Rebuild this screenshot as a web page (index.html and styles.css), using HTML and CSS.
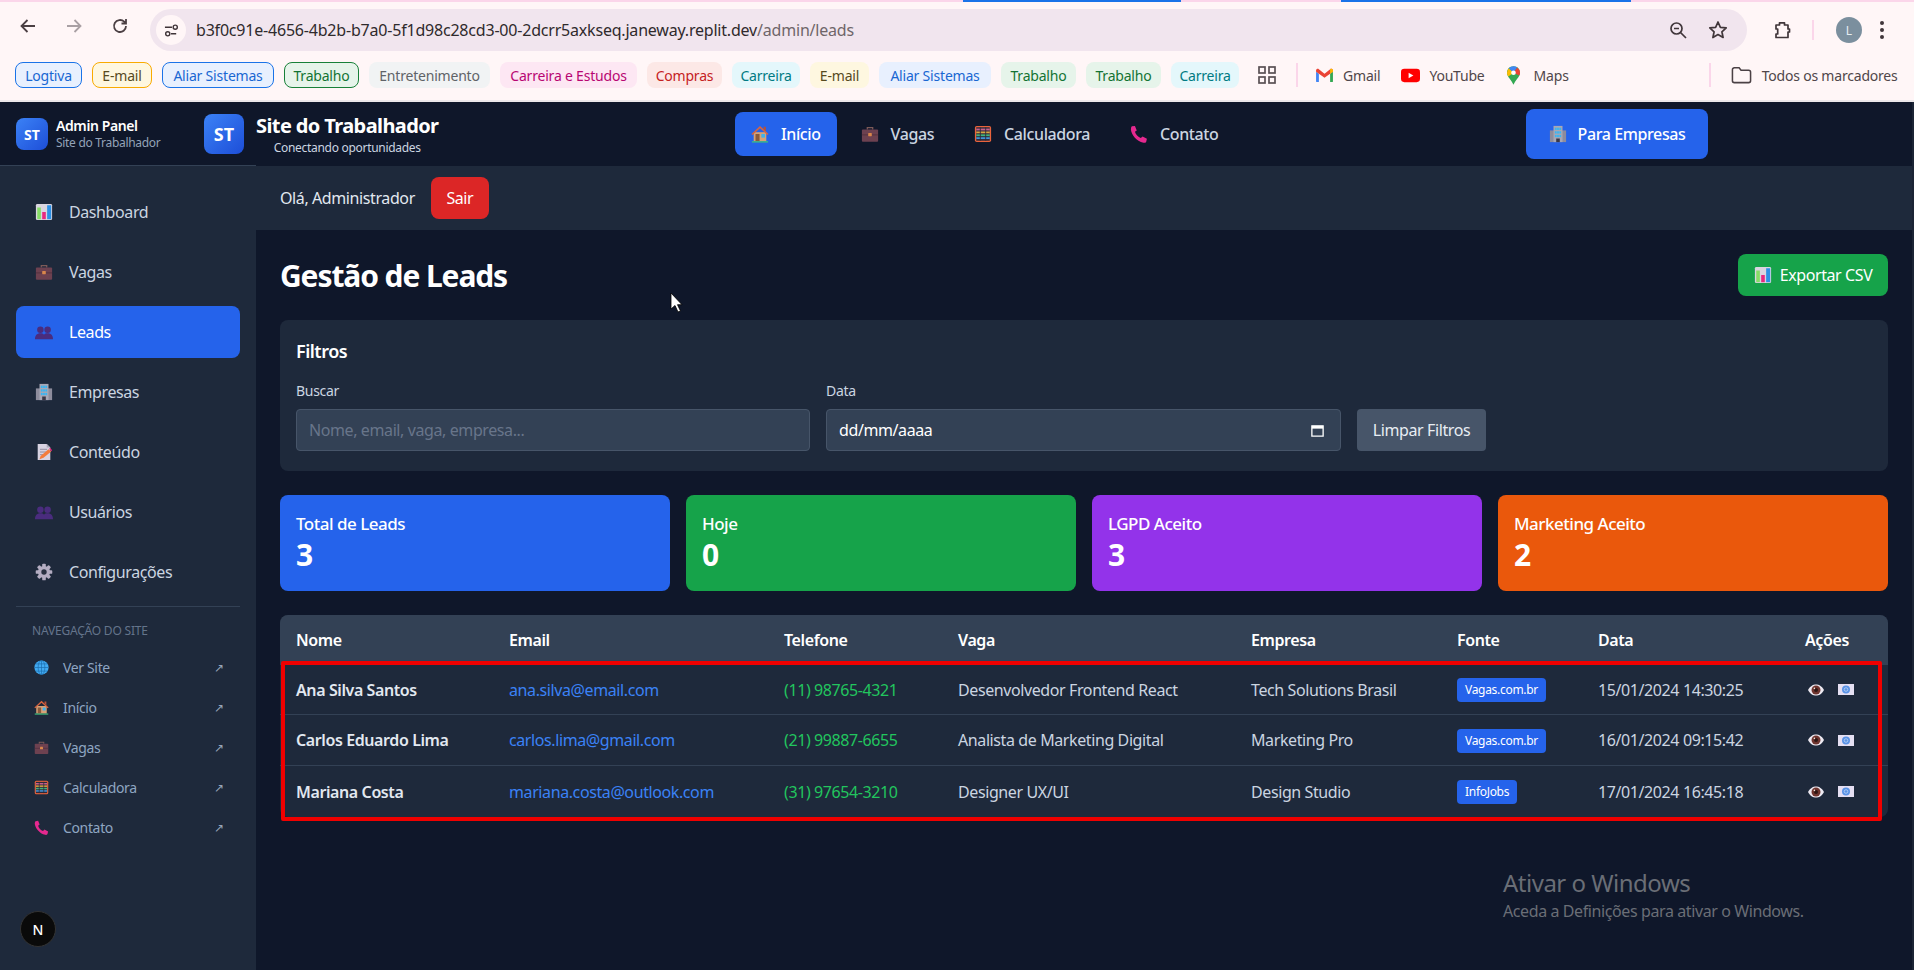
FILE: index.html
```html
<!DOCTYPE html>
<html lang="pt">
<head>
<meta charset="utf-8">
<title>Gestão de Leads</title>
<link rel="stylesheet" href="styles.css">
</head>
<body>
<svg class="defs" width="0" height="0" aria-hidden="true">
  <symbol id="i-chart" viewBox="0 0 20 20"><rect x="1" y="1" width="18" height="18" rx="1.5" fill="#d9d5e0"/><rect x="2.5" y="5" width="4" height="13" fill="#86dd66"/><rect x="8" y="10" width="4" height="8" fill="#e8287f"/><rect x="13.5" y="2.5" width="4.5" height="15.5" fill="#2b90e6"/></symbol>
  <symbol id="i-case" viewBox="0 0 20 20"><path d="M7 5V3h6v2" fill="none" stroke="#7d5a58" stroke-width="1.4"/><rect x="1" y="5" width="18" height="13.5" rx="1" fill="#6d4150"/><rect x="1" y="10.5" width="18" height="1" fill="#54303f"/><rect x="8" y="9" width="4" height="3.4" rx=".5" fill="#d9874b"/></symbol>
  <symbol id="i-people" viewBox="0 0 20 20"><circle cx="6" cy="7.5" r="3.6" fill="#4a2c7e"/><circle cx="14" cy="7.5" r="3.6" fill="#4a2c7e"/><path d="M0 18c0-4 2-6.500 6-6.500 2 0 3.200.6 4 1.500.8-.9 2-1.500 4-1.500 4 0 6 2.500 6 6.500z" fill="#4a2c7e"/></symbol>
  <symbol id="i-building" viewBox="0 0 20 20"><rect x="1" y="6" width="18" height="13" fill="#8d8c9c"/><rect x="5" y="1" width="10" height="18" fill="#a8a7b5"/><g fill="#36b6f5"><rect x="6.500" y="3" width="2" height="2.500"/><rect x="9" y="3" width="2" height="2.500"/><rect x="11.500" y="3" width="2" height="2.500"/><rect x="6.500" y="7" width="2" height="2.500"/><rect x="9" y="7" width="2" height="2.500"/><rect x="11.500" y="7" width="2" height="2.500"/><rect x="6.500" y="11" width="2" height="2.500"/><rect x="9" y="11" width="2" height="2.500"/><rect x="11.500" y="11" width="2" height="2.500"/></g><rect x="8" y="15" width="4" height="4" fill="#3a3848"/></symbol>
  <symbol id="i-memo" viewBox="0 0 20 20"><path d="M3 1h10l4 4v14H3z" fill="#d8d3e2"/><path d="M13 1v4h4z" fill="#aaa5b8"/><path d="M5.500 7h8M5.500 10h7M5.500 13h4" stroke="#8d8799" stroke-width="1"/><path d="M5 18l1.200-3.500L15 7l3 2.500-8.500 7z" fill="#f47c3c"/><path d="M15.500 6.500l1.500-1 2 2.500-1 1.200z" fill="#e8287f"/></symbol>
  <symbol id="i-gear" viewBox="0 0 20 20"><path d="M8.300 1h3.400l.5 2.500 1.700.7 2.100-1.400 2.400 2.400-1.400 2.100.7 1.700 2.500.5v3.400l-2.500.5-.7 1.700 1.400 2.100-2.400 2.400-2.100-1.400-1.700.7-.5 2.500H8.300l-.5-2.500-1.700-.7L4 17.100l-2.400-2.400L3 12.600l-.7-1.700L-.2 10.400V7l2.500-.5.700-1.700L1.600 2.700" fill="none"/><g fill="#b4adc2"><circle cx="10" cy="10" r="6.800"/><rect x="8" y="0.800" width="4" height="18.400" rx="1"/><rect x="8" y="0.800" width="4" height="18.400" rx="1" transform="rotate(45 10 10)"/><rect x="8" y="0.800" width="4" height="18.400" rx="1" transform="rotate(90 10 10)"/><rect x="8" y="0.800" width="4" height="18.400" rx="1" transform="rotate(135 10 10)"/></g><circle cx="10" cy="10" r="3" fill="#2a3142"/></symbol>
  <symbol id="i-globe" viewBox="0 0 20 20"><circle cx="10" cy="10" r="9.500" fill="#41aaf2"/><g fill="none" stroke="#1b6cab" stroke-width=".9"><ellipse cx="10" cy="10" rx="4.500" ry="9.500"/><path d="M10 .5v19M.5 10h19M2 5.200h16M2 14.800h16"/></g></symbol>
  <symbol id="i-house" viewBox="0 0 20 20"><rect x="3" y="8" width="14" height="10" fill="#d7a277"/><path d="M10 1L.5 10l1.200 1L10 3.500l8.300 7.500 1.200-1z" fill="#d9643f"/><path d="M14 2h2.500v5L14 5z" fill="#b85038"/><rect x="5" y="10" width="4.500" height="8" fill="#8a5a3c"/><rect x="11.500" y="10" width="4" height="4" fill="#3db2f0"/><rect x="1" y="18" width="18" height="1.500" fill="#3fbf7f"/></symbol>
  <symbol id="i-abacus" viewBox="0 0 20 20"><rect x="1" y="1" width="18" height="18" rx="2" fill="#e9633c"/><rect x="2.500" y="2.500" width="15" height="15" fill="#2d2a3a"/><rect x="2.500" y="4" width="15" height="2" fill="#c75f8c"/><rect x="2.500" y="7.200" width="15" height="2" fill="#d9a441"/><rect x="2.500" y="10.400" width="15" height="2" fill="#41b27a"/><rect x="2.500" y="13.600" width="15" height="2" fill="#3f94d9"/><path d="M7 2.500v15M13 2.500v15" stroke="#2d2a3a" stroke-width="1"/></symbol>
  <symbol id="i-phone" viewBox="0 0 20 20"><path d="M2 1.500L5.500 1l2 5-2 1.500c.8 3 3.500 6 6.500 7l2-1.800 4.800 2.500-.8 3.300c-.5 1-1.500 1.500-3 1.300C7 18 1.500 10.500 1 5c0-1.500.3-2.700 1-3.500z" fill="#e5298f"/></symbol>
  <symbol id="i-eye" viewBox="0 0 20 14"><path d="M0 7C3 1.500 6.500 0 10 0s7 1.500 10 7c-3 5.500-6.500 7-10 7S3 12.500 0 7z" fill="#ece8f0"/><circle cx="10" cy="7" r="5.600" fill="#6f342e"/><circle cx="10" cy="7" r="2.500" fill="#2e1512"/><circle cx="8" cy="5" r="1" fill="#f4e6e0"/></symbol>
  <symbol id="i-mail" viewBox="0 0 16 11"><rect width="16" height="11" fill="#e5dff2"/><circle cx="8" cy="5.500" r="4" fill="#5a93e6"/><circle cx="8" cy="5.500" r="1.800" fill="none" stroke="#bcd3f5" stroke-width=".8"/></symbol>
</svg>

<header class="browser">
  <div class="tabstrip"><span class="seg seg-a"></span><span class="seg seg-b"></span></div>
  <div class="toolbar">
    <div class="nav-btns">
      <svg class="tb-ico" viewBox="0 0 20 20"><path d="M17 10H4M9.500 4L3.500 10l6 6" fill="none" stroke="#4b3f43" stroke-width="1.800"/></svg>
      <svg class="tb-ico" viewBox="0 0 20 20"><path d="M3 10h13M10.500 4l6 6-6 6" fill="none" stroke="#a9a0a4" stroke-width="1.800"/></svg>
      <svg class="tb-ico" viewBox="0 0 20 20"><path d="M16 10a6 6 0 1 1-1.800-4.300L16 7.500M16 3v4.500h-4.500" fill="none" stroke="#4b3f43" stroke-width="1.800"/></svg>
    </div>
    <div class="omnibox">
      <span class="site-chip"><svg class="chip-ico" viewBox="0 0 16 16"><path d="M1 4.500h7.500M13 11.500H7.500" stroke="#3f3438" stroke-width="1.600"/><circle cx="12" cy="4.500" r="2.200" fill="none" stroke="#3f3438" stroke-width="1.500"/><circle cx="4" cy="11.500" r="2.200" fill="none" stroke="#3f3438" stroke-width="1.500"/></svg></span>
      <span class="url">b3f0c91e-4656-4b2b-b7a0-5f1d98c28cd3-00-2dcrr5axkseq.janeway.replit.dev<span class="url-path">/admin/leads</span></span>
      <svg class="omni-ico omni-zoom" viewBox="0 0 20 20"><circle cx="8.500" cy="8.500" r="5.500" fill="none" stroke="#40363a" stroke-width="1.700"/><path d="M12.500 12.500L18 18M6 8.500h5" stroke="#40363a" stroke-width="1.700"/></svg>
      <svg class="omni-ico" viewBox="0 0 20 20"><path d="M10 2l2.400 5.300 5.800.6-4.300 3.900 1.200 5.700L10 14.600l-5.100 2.900 1.200-5.700L1.800 7.900l5.800-.6z" fill="none" stroke="#40363a" stroke-width="1.700" stroke-linejoin="round"/></svg>
    </div>
    <div class="tb-right">
      <svg class="tb-ico" viewBox="0 0 20 20"><path d="M4 5h3.500V2.800h5V5H16v4h1.500v3H16v5.500H4v-3.500h1.700v-5H4z" fill="none" stroke="#40363a" stroke-width="1.700" stroke-linejoin="round"/></svg>
      <span class="tb-div"></span>
      <span class="avatar">L</span>
      <span class="dots"><i></i><i></i><i></i></span>
    </div>
  </div>
  <div class="bookmarks">
    <span class="bm bm-blue bm-line c1">Logtiva</span>
    <span class="bm bm-yellow bm-line c2">E-mail</span>
    <span class="bm bm-blue bm-line c3">Aliar Sistemas</span>
    <span class="bm bm-green bm-line c4">Trabalho</span>
    <span class="bm bm-grey c5">Entretenimento</span>
    <span class="bm bm-pink c6">Carreira e Estudos</span>
    <span class="bm bm-red c7">Compras</span>
    <span class="bm bm-cyan c8">Carreira</span>
    <span class="bm bm-yellow c9">E-mail</span>
    <span class="bm bm-blue c3">Aliar Sistemas</span>
    <span class="bm bm-green c4">Trabalho</span>
    <span class="bm bm-green c4">Trabalho</span>
    <span class="bm bm-cyan c8">Carreira</span>
    <svg class="apps" viewBox="0 0 18 18"><g fill="none" stroke="#5a5054" stroke-width="1.700"><rect x="1" y="1" width="6" height="6"/><rect x="11" y="1" width="6" height="6"/><rect x="1" y="11" width="6" height="6"/><rect x="11" y="11" width="6" height="6"/></g></svg>
    <span class="bm-div"></span>
    <span class="link link-gmail"><svg class="link-ico" viewBox="0 0 20 16"><path d="M1 15V4l3 2v9H2a1 1 0 0 1-1-1z" fill="#4285f4"/><path d="M19 15V4l-3 2v9h2a1 1 0 0 0 1-1z" fill="#34a853"/><path d="M4 6L1 4V2.500C1 1 2.800.2 4 1.200L10 6l6-4.800c1.200-1 3-.2 3 1.300V4l-3 2-6 4.500z" fill="#ea4335"/><path d="M16 1.200c1.200-1 3-.2 3 1.300V4l-3 2z" fill="#fbbc04"/></svg>Gmail</span>
    <span class="link link-yt"><svg class="link-ico" viewBox="0 0 20 14"><rect width="20" height="14" rx="3.500" fill="#f00"/><path d="M8 4l5 3-5 3z" fill="#fff"/></svg>YouTube</span>
    <span class="link link-maps"><svg class="link-pin" viewBox="0 0 14 20"><path d="M7 0C3 0 0 3 0 7c0 4.500 5 8 7 13 2-5 7-8.500 7-13 0-4-3-7-7-7z" fill="#34a853"/><path d="M2 2.300A7 7 0 0 0 0 7c0 1.500.6 2.800 1.400 4L7 7z" fill="#fbbc04"/><path d="M2 2.300A7 7 0 0 1 7 0c1.500 0 2.800.5 4 1.300L7 7z" fill="#4285f4"/><path d="M11 1.300A7 7 0 0 1 14 7c0 1-.3 2-.8 3L7 7z" fill="#ea4335"/><circle cx="7" cy="7" r="2.500" fill="#fff"/></svg>Maps</span>
    <span class="bm-div bm-div-end"></span>
    <span class="link link-all"><svg class="link-folder" viewBox="0 0 22 18"><path d="M1.500 3.500a2 2 0 0 1 2-2h5l2 2.500h8a2 2 0 0 1 2 2v9a2 2 0 0 1-2 2h-15a2 2 0 0 1-2-2z" fill="none" stroke="#4b4145" stroke-width="1.600"/></svg>Todos os marcadores</span>
  </div>
</header>

<div class="app">
  <div class="topline">
    <div class="admin-head">
      <span class="logo logo-sm">ST</span>
      <div class="admin-txt"><strong>Admin Panel</strong><small>Site do Trabalhador</small></div>
    </div>
    <div class="brand">
      <span class="logo logo-lg">ST</span>
      <div class="brand-txt"><strong>Site do Trabalhador</strong><small>Conectando oportunidades</small></div>
    </div>
    <nav class="site-nav">
      <a class="site-link is-on"><svg class="em18"><use href="#i-house"/></svg>Início</a>
      <a class="site-link"><svg class="em18"><use href="#i-case"/></svg>Vagas</a>
      <a class="site-link"><svg class="em18"><use href="#i-abacus"/></svg>Calculadora</a>
      <a class="site-link"><svg class="em18"><use href="#i-phone"/></svg>Contato</a>
    </nav>
    <a class="cta"><svg class="em18"><use href="#i-building"/></svg>Para Empresas</a>
  </div>

  <div class="body-row">
    <aside class="sidebar">
      <ul class="side-list">
        <li class="side-item"><svg class="em18"><use href="#i-chart"/></svg>Dashboard</li>
        <li class="side-item"><svg class="em18"><use href="#i-case"/></svg>Vagas</li>
        <li class="side-item is-on"><svg class="em18"><use href="#i-people"/></svg>Leads</li>
        <li class="side-item"><svg class="em18"><use href="#i-building"/></svg>Empresas</li>
        <li class="side-item"><svg class="em18"><use href="#i-memo"/></svg>Conteúdo</li>
        <li class="side-item"><svg class="em18"><use href="#i-people"/></svg>Usuários</li>
        <li class="side-item"><svg class="em18"><use href="#i-gear"/></svg>Configurações</li>
      </ul>
      <div class="side-sep"></div>
      <div class="side-cap">NAVEGAÇÃO DO SITE</div>
      <ul class="sub-list">
        <li class="sub-item"><svg class="em15"><use href="#i-globe"/></svg><span class="sub-txt">Ver Site</span><span class="ext">↗</span></li>
        <li class="sub-item"><svg class="em15"><use href="#i-house"/></svg><span class="sub-txt">Início</span><span class="ext">↗</span></li>
        <li class="sub-item"><svg class="em15"><use href="#i-case"/></svg><span class="sub-txt">Vagas</span><span class="ext">↗</span></li>
        <li class="sub-item"><svg class="em15"><use href="#i-abacus"/></svg><span class="sub-txt">Calculadora</span><span class="ext">↗</span></li>
        <li class="sub-item"><svg class="em15"><use href="#i-phone"/></svg><span class="sub-txt">Contato</span><span class="ext">↗</span></li>
      </ul>
      <span class="next-badge">N</span>
    </aside>

    <main class="main">
      <div class="userbar"><span>Olá, Administrador</span><button class="btn-exit">Sair</button></div>
      <div class="content">
        <div class="page-head">
          <h1>Gestão de Leads</h1>
          <button class="btn-export"><svg class="em18"><use href="#i-chart"/></svg>Exportar CSV</button>
        </div>

        <section class="filters">
          <h2>Filtros</h2>
          <div class="filter-row">
            <label class="field"><span>Buscar</span><span class="input ph">Nome, email, vaga, empresa...</span></label>
            <label class="field"><span>Data</span><span class="input date">dd/mm/aaaa<svg class="cal" viewBox="0 0 16 16"><path d="M2 3h12v11H2z" fill="none" stroke="#fff" stroke-width="1.400"/><rect x="2" y="3" width="12" height="3" fill="#fff"/></svg></span></label>
            <button class="btn-clear">Limpar Filtros</button>
          </div>
        </section>

        <section class="stats">
          <div class="stat st-blue"><span>Total de Leads</span><b>3</b></div>
          <div class="stat st-green"><span>Hoje</span><b>0</b></div>
          <div class="stat st-purple"><span>LGPD Aceito</span><b>3</b></div>
          <div class="stat st-orange"><span>Marketing Aceito</span><b>2</b></div>
        </section>

        <div class="table-wrap">
          <table class="leads">
            <colgroup><col class="c-nome"><col class="c-email"><col class="c-tel"><col class="c-vaga"><col class="c-emp"><col class="c-fonte"><col class="c-data"><col class="c-acoes"></colgroup>
            <thead><tr><th>Nome</th><th>Email</th><th>Telefone</th><th>Vaga</th><th>Empresa</th><th>Fonte</th><th>Data</th><th>Ações</th></tr></thead>
            <tbody>
              <tr class="r-first"><td class="name">Ana Silva Santos</td><td class="mail">ana.silva@email.com</td><td class="tel">(11) 98765-4321</td><td>Desenvolvedor Frontend React</td><td>Tech Solutions Brasil</td><td><span class="tag">Vagas.com.br</span></td><td>15/01/2024 14:30:25</td><td><span class="acts"><svg class="act-eye"><use href="#i-eye"/></svg><svg class="act-mail"><use href="#i-mail"/></svg></span></td></tr>
              <tr><td class="name">Carlos Eduardo Lima</td><td class="mail">carlos.lima@gmail.com</td><td class="tel">(21) 99887-6655</td><td>Analista de Marketing Digital</td><td>Marketing Pro</td><td><span class="tag">Vagas.com.br</span></td><td>16/01/2024 09:15:42</td><td><span class="acts"><svg class="act-eye"><use href="#i-eye"/></svg><svg class="act-mail"><use href="#i-mail"/></svg></span></td></tr>
              <tr><td class="name">Mariana Costa</td><td class="mail">mariana.costa@outlook.com</td><td class="tel">(31) 97654-3210</td><td>Designer UX/UI</td><td>Design Studio</td><td><span class="tag">InfoJobs</span></td><td>17/01/2024 16:45:18</td><td><span class="acts"><svg class="act-eye"><use href="#i-eye"/></svg><svg class="act-mail"><use href="#i-mail"/></svg></span></td></tr>
            </tbody>
          </table>
          <div class="highlight"></div>
        </div>
      </div>
      <div class="watermark"><p class="wm-1">Ativar o Windows</p><p class="wm-2">Aceda a Definições para ativar o Windows.</p></div>
      <svg class="cursor" viewBox="0 0 14 21"><path d="M1 1v16l4-3.500 3 6.500 2.500-1-3-6.300H12z" fill="#fff" stroke="#000" stroke-width=".8"/></svg>
    </main>
  </div>
</div>
</body>
</html>
```

FILE: styles.css
```css
* { box-sizing: border-box; }
html, body { margin: 0; height: 970px; overflow: hidden; }
body { font-family: "Noto Sans", "Liberation Sans", sans-serif; background: #0f172a; color: #fff; }
.defs { position: absolute; }
ul { list-style: none; margin: 0; padding: 0; }
p { margin: 0; }
button { font: inherit; border: 0; color: #fff; padding: 0; }

/* browser chrome */
.browser { height: 102px; background: #fff6f7; color: #40363a; border-bottom: 2px solid #ece8ea; }
.tabstrip { height: 2px; background: #fbd6ea; display: flex; }
.seg { height: 2px; background: #1a73e8; }
.seg-a { margin-left: 963px; width: 218px; }
.seg-b { margin-left: 160px; width: 290px; }
.toolbar { height: 48px; display: flex; align-items: center; }
.nav-btns { display: flex; gap: 26px; width: 150px; padding-left: 18px; }
.tb-ico { width: 20px; height: 20px; flex: none; }
.omnibox { width: 1597px; height: 42px; margin-top: 8px; border-radius: 21px; background: #f1e5ee; display: flex; align-items: center; padding-left: 6px; }
.site-chip { width: 30px; height: 30px; border-radius: 50%; background: #fff6f7; display: flex; align-items: center; justify-content: center; margin-right: 10px; }
.chip-ico { width: 15px; height: 15px; }
.url { font-size: 16px; color: #2f2a2c; letter-spacing: -0.2px; flex: 1; white-space: nowrap; }
.url-path { color: #6f6569; }
.omni-ico { width: 20px; height: 20px; margin-right: 19px; }
.omni-zoom { margin-right: 20px; }
.tb-right { display: flex; align-items: center; margin-top: 8px; padding-left: 25px; }
.tb-div { width: 2px; height: 20px; background: #fbd6ea; margin: 0 22px 0 20px; }
.avatar { width: 26px; height: 26px; border-radius: 50%; background: #7b8f9e; color: #e6edf1; font-size: 12px; display: flex; align-items: center; justify-content: center; }
.dots { display: flex; flex-direction: column; gap: 3px; margin-left: 18px; }
.dots i { width: 4px; height: 4px; border-radius: 50%; background: #40363a; }

.bookmarks { height: 50px; display: flex; align-items: center; padding-left: 15px; font-size: 14px; }
.bm { height: 26px; border-radius: 8px; display: flex; align-items: center; justify-content: center; margin-right: 10px; white-space: nowrap; flex: none; letter-spacing: -0.2px; }
.bm-line { border: 1.500px solid; }
.bm-blue { background: #e8f0fe; color: #1967d2; border-color: #1a73e8; }
.bm-yellow { background: #fef7e0; color: #574a1e; border-color: #f9ab00; }
.bm-green { background: #e6f4ea; color: #137333; border-color: #188038; }
.bm-grey { background: #f1f3f4; color: #5f6368; }
.bm-pink { background: #fde7f3; color: #b80672; }
.bm-red { background: #fce8e6; color: #c5221f; }
.bm-cyan { background: #e4f7fb; color: #007b83; }
.c1 { width: 67px; } .c2 { width: 60px; } .c3 { width: 112px; } .c4 { width: 75px; }
.c5 { width: 121px; } .c6 { width: 137px; } .c7 { width: 75px; } .c8 { width: 68px; } .c9 { width: 59px; }
.apps { width: 18px; height: 18px; margin: 0 20px 0 9px; flex: none; }
.bm-div { width: 2px; height: 24px; background: #fbd6ea; flex: none; }
.link { display: flex; align-items: center; color: #50464a; white-space: nowrap; letter-spacing: -0.2px; }
.link-ico { width: 19px; height: 15px; margin-right: 9px; }
.link-pin { width: 13px; height: 19px; margin-right: 14px; }
.link-folder { width: 21px; height: 18px; margin-right: 10px; }
.link-gmail { margin-left: 17px; }
.link-yt { margin-left: 21px; }
.link-maps { margin-left: 22px; }
.bm-div-end { margin-left: 140px; }
.link-all { margin-left: 20px; }

/* app */
.app { height: 868px; display: flex; flex-direction: column; border-right: 2px solid #1b2435; position: relative; }
.topline { height: 64px; flex: none; background: #0f172a; display: grid; grid-template-columns: 204px 531px 791px 1fr; align-items: center; position: relative; }
.topline::after { content: ""; position: absolute; left: 0; bottom: 0; width: 256px; height: 1px; background: #334155; }
.admin-head { display: flex; align-items: center; gap: 8px; padding-left: 16px; }
.logo { display: flex; align-items: center; justify-content: center; font-weight: 700; background: linear-gradient(135deg, #3b82f6, #1d4ed8); flex: none; }
.logo-sm { width: 32px; height: 32px; border-radius: 8px; font-size: 14px; }
.logo-lg { width: 40px; height: 40px; border-radius: 8px; font-size: 18px; }
.admin-txt strong { display: block; font-size: 14px; font-weight: 600; line-height: 18px; letter-spacing: -0.4px; }
.admin-txt small { display: block; font-size: 12px; color: #94a3b8; line-height: 16px; letter-spacing: -0.3px; white-space: nowrap; }
.brand { display: flex; align-items: center; gap: 12px; }
.brand-txt strong { display: block; font-size: 20px; font-weight: 700; line-height: 28px; letter-spacing: -0.6px; white-space: nowrap; }
.brand-txt small { display: block; font-size: 12px; color: #cbd5e1; text-align: center; line-height: 16px; letter-spacing: -0.3px; }
.site-nav { display: flex; gap: 8px; }
.site-link { height: 44px; padding: 0 16px; border-radius: 8px; display: flex; align-items: center; gap: 12px; font-size: 16px; font-weight: 500; color: #cbd5e1; letter-spacing: -0.4px; }
.site-link.is-on { background: #2563eb; color: #fff; }
.cta { width: 182px; height: 50px; border-radius: 8px; background: #2563eb; display: flex; align-items: center; justify-content: center; gap: 11px; font-size: 16px; font-weight: 500; letter-spacing: -0.4px; white-space: nowrap; }
.em18 { width: 18px; height: 18px; flex: none; }
.em15 { width: 15px; height: 15px; flex: none; }

.body-row { flex: 1; display: flex; min-height: 0; }
.sidebar { width: 256px; flex: none; background: #1e293b; padding: 20px 16px 0; position: relative; }
.side-list { display: flex; flex-direction: column; gap: 8px; }
.side-item { height: 52px; border-radius: 8px; padding: 0 19px; display: flex; align-items: center; gap: 16px; font-size: 16px; color: #cbd5e1; letter-spacing: -0.4px; }
.side-item.is-on { background: #2563eb; color: #fff; }
.side-sep { height: 1px; background: #334155; margin-top: 8px; }
.side-cap { font-size: 12px; color: #64748b; padding: 16px 16px 8px; line-height: 16px; letter-spacing: -0.2px; }
.sub-item { height: 40px; display: flex; align-items: center; padding: 0 16px 0 18px; font-size: 14px; color: #8fa6c2; letter-spacing: -0.35px; }
.sub-txt { margin-left: 14px; flex: 1; }
.ext { font-size: 12px; color: #94a3b8; width: 10px; }
.next-badge { position: absolute; left: 20px; top: 745px; width: 36px; height: 36px; border-radius: 50%; background: #0a0a0a; border: 1px solid #333; font-size: 14px; font-weight: 500; display: flex; align-items: center; justify-content: center; }

.main { flex: 1; min-width: 0; position: relative; }
.userbar { height: 64px; background: #1e293b; padding-left: 24px; display: flex; align-items: center; gap: 16px; font-size: 16px; color: #e2e8f0; letter-spacing: -0.4px; }
.btn-exit { width: 58px; height: 42px; border-radius: 8px; background: #dc2626; font-size: 16px; letter-spacing: -0.4px; }
.content { padding: 24px 24px 0; }
.page-head { display: flex; justify-content: space-between; align-items: center; height: 42px; }
h1 { margin: 0; font-size: 30px; font-weight: 700; letter-spacing: -1.100px; }
.btn-export { width: 150px; height: 42px; border-radius: 8px; background: #16a34a; font-size: 16px; display: flex; align-items: center; justify-content: center; gap: 8px; letter-spacing: -0.4px; }
.filters { margin-top: 24px; height: 151px; border-radius: 8px; background: #1e293b; padding: 16px; }
h2 { margin: 0; font-size: 18px; font-weight: 600; line-height: 30px; letter-spacing: -0.5px; }
.filter-row { display: grid; grid-template-columns: 514px 515px 129px; gap: 16px; align-items: end; margin-top: 15px; }
.filter-row { column-gap: 16px; }
.field { display: block; font-size: 14px; color: #cbd5e1; letter-spacing: -0.3px; }
.field > span:first-child { display: block; line-height: 20px; margin-bottom: 8px; }
.input { display: flex; align-items: center; justify-content: space-between; height: 42px; padding: 0 12px; border: 1px solid #475569; background: #334155; border-radius: 4px; font-size: 16px; letter-spacing: -0.4px; }
.ph { color: #68758a; font-size: 16px; }
.date { color: #fff; }
.cal { width: 15px; height: 15px; margin-right: 3px; }
.btn-clear { height: 42px; border-radius: 4px; background: #475569; font-size: 16px; letter-spacing: -0.4px; color: #e8edf3; }
.stats { margin-top: 24px; display: grid; grid-template-columns: repeat(4, 1fr); gap: 16px; }
.stat { height: 96px; border-radius: 8px; padding: 16px; }
.stat span { display: block; font-size: 17px; font-weight: 500; line-height: 26px; letter-spacing: -0.5px; }
.stat b { display: block; font-size: 30px; font-weight: 700; line-height: 36px; }
.st-blue { background: #2563eb; } .st-green { background: #16a34a; } .st-purple { background: #9333ea; } .st-orange { background: #ea580c; }
.table-wrap { margin-top: 24px; position: relative; }
.leads { width: 100%; table-layout: fixed; border-collapse: separate; border-spacing: 0; background: #1e293b; border-radius: 8px; overflow: hidden; font-size: 16px; letter-spacing: -0.4px; }
.c-nome { width: 213px; } .c-email { width: 275px; } .c-tel { width: 174px; } .c-vaga { width: 293px; }
.c-emp { width: 206px; } .c-fonte { width: 141px; } .c-data { width: 207px; } .c-acoes { width: 99px; }
.leads th { height: 50px; background: #334155; text-align: left; padding: 0 16px; font-weight: 600; }
.leads td { height: 51px; padding: 0 16px; color: #cbd5e1; border-bottom: 1px solid #334155; white-space: nowrap; }
.leads .r-first td { height: 50px; }
.leads tr:last-child td { border-bottom: 0; }
.leads .name { font-weight: 600; color: #e2e8f0; }
.leads .mail { color: #3b82f6; }
.leads .tel { color: #22c55e; }
.tag { display: inline-block; background: #2563eb; color: #fff; height: 24px; line-height: 24px; padding: 0 8px; border-radius: 4px; font-size: 12px; letter-spacing: -0.3px; }
.acts { display: flex; align-items: center; gap: 14px; padding-left: 3px; }
.act-eye { width: 16px; height: 12px; }
.act-mail { width: 16px; height: 11px; }
.highlight { position: absolute; left: 1px; top: 46px; width: 1601px; height: 160px; border: 4px solid #f00000; border-radius: 2px; pointer-events: none; }
.watermark { position: absolute; left: 1247px; top: 701px; color: #6a6e76; }
.wm-1 { font-size: 24px; line-height: 32px; letter-spacing: -0.5px; }
.wm-2 { font-size: 16px; line-height: 24px; letter-spacing: -0.4px; }
.cursor { position: absolute; left: 414px; top: 126px; width: 14px; height: 21px; }
```
